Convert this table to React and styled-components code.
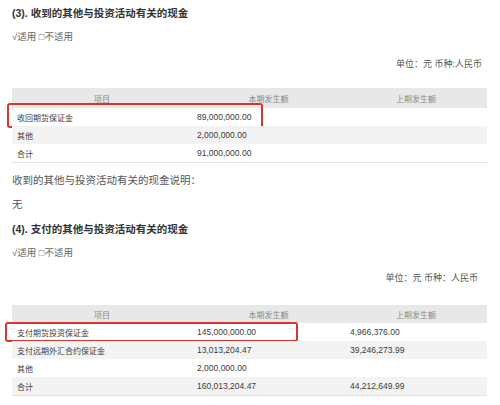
import styled, { createGlobalStyle } from 'styled-components';

const GlobalStyle = createGlobalStyle`
    html, body {
        margin: 0;
        padding: 0;
        background: #ffffff;
    }
    body {
        font-family: "Liberation Sans", "Noto Sans CJK SC", sans-serif;
    }
`
const Page = styled.div`
    width: 500px;
    height: 405px;
    overflow: hidden;
    padding: 0 13px 0 12px;
    box-sizing: border-box;
    display: flex;
    flex-direction: column;
`
const Heading = styled.h2`
    margin: ${props => props.top || 0}px 0 0;
    height: 26px;
    line-height: 26px;
    font-size: 10.5px;
    font-weight: 700;
    color: #333;
    white-space: nowrap;
`
const Applicable = styled.p`
    margin: 0;
    height: 22px;
    line-height: 22px;
    font-size: 9.5px;
    color: #666;
`
const Unit = styled.p`
    margin: ${props => props.top}px 0 0;
    height: 20px;
    line-height: 20px;
    font-size: 9px;
    color: #555;
    text-align: right;
    padding-right: ${props => props.right}px;
`
const Note = styled.p`
    margin: ${props => props.top}px 0 0;
    height: 20px;
    line-height: 20px;
    font-size: 10.5px;
    color: #555;
`
const Table = styled.div`
    margin-top: ${props => props.top}px;
    display: flex;
    flex-direction: column;
    border-bottom: 1px solid #e2e2e2;
`
const Row = styled.div`
    position: relative;
    display: grid;
    grid-template-columns: 180px 153px 1fr;
    height: ${props => props.head || 18}px;
    align-items: center;
    background: ${props => props.head ? '#e8e8e8' : props.stripe ? '#f3f3f3' : '#ffffff'};
`
const Cell = styled.div`
    padding-left: ${props => props.head ? 0 : props.num ? 5 : 5}px;
    text-align: ${props => props.head ? 'center' : 'left'};
    font-size: ${props => props.num ? 8.5 : 8}px;
    color: ${props => props.head ? '#888' : '#3a3a3a'};
    white-space: nowrap;
`
const Highlight = styled.div`
    position: absolute;
    left: ${props => props.box.left}px;
    top: ${props => props.box.top}px;
    width: ${props => props.box.width}px;
    bottom: ${props => props.box.bottom}px;
    border: 2px solid #d9352f;
    border-radius: 3px;
    pointer-events: none;
`

function DataTable({ top, headHeight, rows, box }) {
    return (
        <Table top={top}>
            <Row head={headHeight}>
                <Cell head>项目</Cell>
                <Cell head>本期发生额</Cell>
                <Cell head>上期发生额</Cell>
            </Row>
            {rows.map((row, index) => (
                <Row key={index} stripe={index % 2 === 1}>
                    <Cell>{row[0]}</Cell>
                    <Cell num>{row[1]}</Cell>
                    <Cell num>{row[2]}</Cell>
                    {index === 0 && <Highlight box={box} />}
                </Row>
            ))}
        </Table>
    )
}

const received = [
    ["收回期货保证金", "89,000,000.00", ""],
    ["其他", "2,000,000.00", ""],
    ["合计", "91,000,000.00", ""]
]

const paid = [
    ["支付期货投资保证金", "145,000,000.00", "4,966,376.00"],
    ["支付远期外汇合约保证金", "13,013,204.47", "39,246,273.99"],
    ["其他", "2,000,000.00", ""],
    ["合计", "160,013,204.47", "44,212,649.99"]
]

export default function App() {
    return (
        <>
            <GlobalStyle />
            <Page>
                <Heading>(3). 收到的其他与投资活动有关的现金</Heading>
                <Applicable>√适用 □不适用</Applicable>
                <Unit top={6} right={5}>单位：元 币种:人民币</Unit>
                <DataTable
                    top={14}
                    headHeight={20}
                    rows={received}
                    box={{ left: -5, top: -5, width: 252, bottom: -2 }}
                />
                <Note top={7}>收到的其他与投资活动有关的现金说明：</Note>
                <Note top={4}>无</Note>
                <Heading top={2}>(4). 支付的其他与投资活动有关的现金</Heading>
                <Applicable>√适用 □不适用</Applicable>
                <Unit top={4} right={9}>单位：元 币种：人民币</Unit>
                <DataTable
                    top={17}
                    headHeight={18}
                    rows={paid}
                    box={{ left: -7, top: -1, width: 289, bottom: -1 }}
                />
            </Page>
        </>
    )
}
